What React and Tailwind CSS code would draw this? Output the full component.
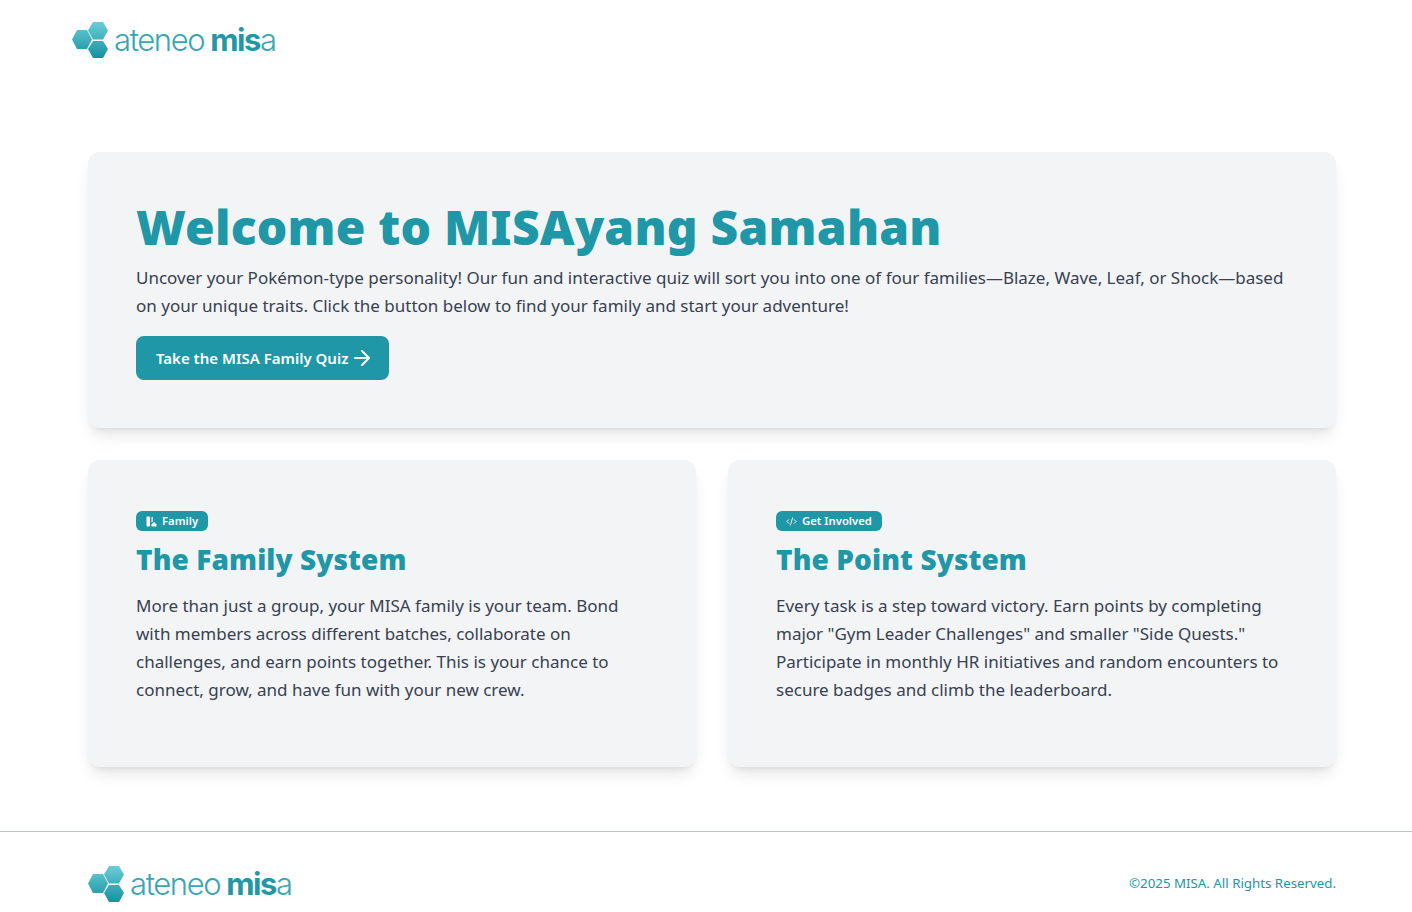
import { ArrowRight, CodeXml } from "lucide-react";

const BODY_FONT = "font-['Noto_Sans','Open_Sans',sans-serif]";

function Logo() {
    return (
        <div className="flex items-center h-[38px]">
            <svg width="36" height="38" viewBox="0 0 36 38" className="shrink-0">
                <defs>
                    <linearGradient id="hexFill" gradientUnits="userSpaceOnUse" x1="0" y1="0" x2="0" y2="38">
                        <stop offset="0" stopColor="#6fd0da" />
                        <stop offset="1" stopColor="#17919f" />
                    </linearGradient>
                </defs>
                <path fill="url(#hexFill)" d="M5 10h10l5 9.5-5 9.5H5L0 19.5z" />
                <path fill="url(#hexFill)" d="M21 2h10l5 8.5-5 9H21l-5-9z" />
                <path fill="url(#hexFill)" d="M21 21h10l5 8-5 9H21l-5-9z" />
            </svg>
            <div className="ml-[6px] font-['Inter',sans-serif] text-[31px] leading-none tracking-[-1.4px] whitespace-nowrap text-[#3aa5b3] font-light">
                <span>ateneo</span>
                <span className="ml-[6px] font-bold text-[#2297a6]">mis</span>
                <span>a</span>
            </div>
        </div>
    );
}

function Badge({ icon, label }) {
    return (
        <div className="flex w-fit items-center gap-[5px] h-5 px-[10px] rounded-md bg-[#2097a6] text-white text-[11.3px] font-semibold">
            {icon}
            {label}
        </div>
    );
}

function FamilyIcon() {
    return (
        <svg width="11" height="11" viewBox="0 0 11 11" fill="white">
            <rect x="0.5" y="0.5" width="3.5" height="10" rx="1" />
            <path d="M5.5 1h1.2v4.2L5.5 6.4z" />
            <path d="M5.5 10.5V8.2L8 6l2.5 2.5v2z" />
        </svg>
    );
}

function InfoCard({ icon, badge, title, text }) {
    return (
        <div className="h-[307px] rounded-xl bg-[#f3f4f6] shadow-lg px-12 pt-[51px]">
            <Badge icon={icon} label={badge} />
            <h2 className="mt-[10px] mb-[15px] font-black text-[28px] leading-[36px] tracking-[0.1px] text-[#2097a6]">
                {title}
            </h2>
            <p className="text-[#374151] text-[17px] leading-7">{text}</p>
        </div>
    );
}

export default function App() {
    return (
        <div className={`${BODY_FONT} bg-white min-h-[912px]`}>
            <header className="h-[72px] pl-[72px] pt-[20px]">
                <Logo />
            </header>

            <main className="pl-[88px] pr-[76px] pt-20">
                <section className="h-[276px] rounded-xl bg-[#f3f4f6] shadow-lg px-12 pt-[47px]">
                    <h1 className="font-black text-5xl leading-[56px] tracking-[0.2px] text-[#2097a6]">
                        Welcome to MISAyang Samahan
                    </h1>
                    <p className="mt-[9px] text-[#374151] text-[17px] leading-7">
                        Uncover your Pokémon-type personality! Our fun and interactive quiz will sort you into one of four families—Blaze, Wave, Leaf, or Shock—based on your unique traits. Click the button below to find your family and start your adventure!
                    </p>
                    <button className="mt-4 h-11 pl-5 pr-[15px] rounded-lg bg-[#2097a6] text-white font-semibold text-[15px] inline-flex items-center gap-[2px]">
                        Take the MISA Family Quiz
                        <ArrowRight size={24} strokeWidth={2} />
                    </button>
                </section>

                <div className="grid grid-cols-2 gap-8 mt-8">
                    <InfoCard
                        icon={<FamilyIcon />}
                        badge="Family"
                        title="The Family System"
                        text="More than just a group, your MISA family is your team. Bond with members across different batches, collaborate on challenges, and earn points together. This is your chance to connect, grow, and have fun with your new crew."
                    />
                    <InfoCard
                        icon={<CodeXml size={11} strokeWidth={2} />}
                        badge="Get Involved"
                        title="The Point System"
                        text={'Every task is a step toward victory. Earn points by completing major "Gym Leader Challenges" and smaller "Side Quests." Participate in monthly HR initiatives and random encounters to secure badges and climb the leaderboard.'}
                    />
                </div>
            </main>

            <footer className="mt-16 border-t border-[#b9c4c7] h-[81px] pl-[88px] pr-[76px] pt-[32px] flex justify-between">
                <Logo />
                <p className="mt-[9px] text-[13.3px] leading-5 text-[#2097a6]">©2025 MISA. All Rights Reserved.</p>
            </footer>
        </div>
    );
}
